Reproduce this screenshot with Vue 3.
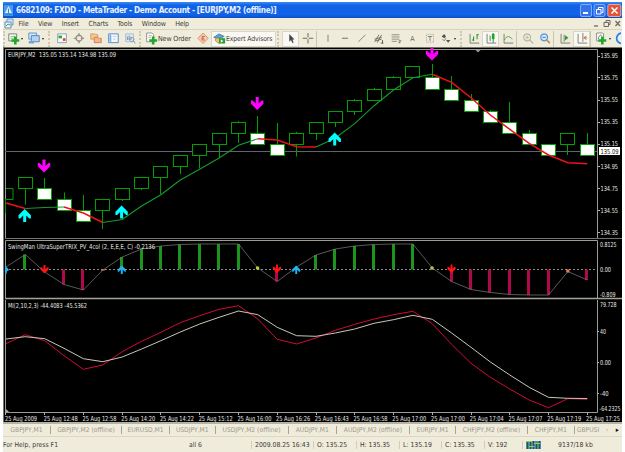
<script setup>
const menus = ['File', 'View', 'Insert', 'Charts', 'Tools', 'Window', 'Help']

// every icon is a list of shapes on a 16x14 grid
const icons = {
  newChart: [
    { d: 'M2 2h9v8H2z', f: '#f4f8f0', s: '#6b7d6b' },
    { d: 'M4 5h5M4 7h4', s: '#9ab09a' },
    { d: 'M8 5h3v3h3v3h-3v3H8v-3H5V8h3z', f: '#1fa82a' }
  ],
  profiles: [
    { d: 'M2 1h9v7H2z', f: '#cfe4f7', s: '#5a8fc0' },
    { d: 'M5 4h9v7H5z', f: '#b5d3f0', s: '#4a82ba' },
    { d: 'M2 10h6v3H2z', f: '#6fa4d8' }
  ],
  market: [
    { d: 'M3 2h10v10H3z', f: '#f8fafc', s: '#7c9ab8' },
    { d: 'M4 4h4v3H4z', f: '#2aa43a' },
    { d: 'M9 7h3v3H9z', f: '#d8402c' }
  ],
  target: [
    { d: 'M8 3.500a3.500 3.500 0 1 0 .1 0z', s: '#8a887c', w: 1.4 },
    { d: 'M8 1v4M8 9v4M2 7h4M10 7h4', s: '#8a887c', w: 1.2 }
  ],
  navigator: [
    { d: 'M2 2h5l1 1h2v5H2z', f: '#f2c890', s: '#d09868' },
    { d: 'M6 6h4l1 1h3v5H6z', f: '#f7b48a', s: '#cc7c4c' }
  ],
  terminal: [
    { d: 'M3 2h11v10H3z', f: '#f4f8fc', s: '#4684c4' },
    { d: 'M4 3h2v8H4z', f: '#78aee0' },
    { d: 'M8 5h4M8 8h3', s: '#b8cce0' }
  ],
  tester: [
    { d: 'M3 2h9v9H3z', f: '#dbe6ee', s: '#a8bccc' },
    { d: 'M5 9V5M7 9V4M9 9V6', s: '#6688a8' },
    { d: 'M10 6a2.4 2.4 0 1 0 .1 0zM12 10l2 3', s: '#7890a8' }
  ],
  order: [
    { d: 'M3 1h6l2 2v8H3z', f: '#fff', s: '#8a8a80' },
    { d: 'M5 4h4M5 6h3', s: '#b0b0a8' },
    { d: 'M9 5h3v3h3v3h-3v3H9v-3H6V8h3z', f: '#1fa82a' }
  ],
  diamond: [
    { d: 'M8 1l6 6-6 6-6-6z', f: '#f6c8ac', s: '#e09068' },
    { d: 'M10 5H7v4h3M7 7h2', s: '#c05c40' }
  ],
  expert: [
    { d: 'M2 6l6-4 6 3-6 2z', f: '#5aa4d8', s: '#3c7cae' },
    { d: 'M4 7h8v3l-4 3-4-3z', f: '#f0c070', s: '#b89048' },
    { d: 'M8 7h7v6H8z', f: '#20a030' },
    { d: 'M10 8l3 2-3 2z', f: '#fff' }
  ],
  cursor: [{ d: 'M6 2v9l2-2 1.5 3.5 1.5-.7-1.4-3.3H12z', f: '#48484c' }],
  cross: [{ d: 'M8 1v5M8 8v5M2 7h5M9 7h5', s: '#58564e' }],
  vline: [{ d: 'M8 3v8', s: '#77756a' }],
  hline: [{ d: 'M4.500 7h7', s: '#66645a' }],
  trend: [{ d: 'M4 11l8-8', s: '#77756a' }],
  channel: [
    { d: 'M3 11l5-8M6 12l5-9M3 8l8-2M4 10l7-2', s: '#66645a' },
    { d: 'M12 9v4M10 12.500h3', s: '#55534a' }
  ],
  fibo: [
    { d: 'M3 3h9M3 5.500h9M3 8h9M3 10.500h6', s: '#88867a' },
    { d: 'M11 10h3M11 12h2', s: '#55534a' }
  ],
  label: [
    { d: 'M4 2.500h8v9H4z', s: '#a09e90', dash: '1 1' },
    { d: 'M5.500 5h5M8 5v5', s: '#77756a' }
  ],
  arrows: [
    { d: 'M3 5l3-3 2 3-2 2z', f: '#55534a' },
    { d: 'M8 9h5l-2.500 3z', f: '#55534a' },
    { d: 'M4 8l2 2 2-3', s: '#77756a' }
  ],
  bars: [
    { d: 'M3.500 2v10.500H14', s: '#6f7468' },
    { d: 'M7.500 5v5M11.500 2v6M7.500 9h-2M11.500 3h2', s: '#1f9a2f', w: 1.2 }
  ],
  candles: [
    { d: 'M3.500 2v10.500H14', s: '#6f7468' },
    { d: 'M7 4v6M10.500 1v11', s: '#1f7a2a' },
    { d: 'M9 2h3v6H9z', f: '#16a828' }
  ],
  line: [
    { d: 'M3.500 2v10.500H14', s: '#6f7468' },
    { d: 'M4 9c2-5 5-5 9-1', s: '#4aa04a' }
  ],
  zoomIn: [
    { d: 'M7 2a4 4 0 1 0 .1 0zM10 9l4 4', s: '#b8b5a4', w: 1.3 },
    { d: 'M5 6h4M7 4v4', s: '#b8b5a4' }
  ],
  zoomOut: [
    { d: 'M7 2a4 4 0 1 0 .1 0z', f: '#d4e8fa', s: '#5794cc', w: 1.3 },
    { d: 'M10 9l3.500 3.500', s: '#c08a50', w: 2 },
    { d: 'M5 6h4', s: '#3878b4' }
  ],
  autoScroll: [
    { d: 'M3.500 2v10.500H14M7 3v8', s: '#6f7468' },
    { d: 'M8 3.500l4 3-4 3z', f: '#27a339' }
  ],
  shift: [
    { d: 'M3.500 2v10.500H14M9 1v10', s: '#6f7468' },
    { d: 'M14 6.500h-3M13 4.500l-3 2 3 2', s: '#c0602c' }
  ],
  indicators: [
    { d: 'M3 1h7l1 1v8H3z', f: '#fff', s: '#7c8478' },
    { d: 'M5 8c1-5 2-5 4-4', s: '#6a6a60' },
    { d: 'M8 5h3v3h3v3h-3v3H8v-3H5V8h3z', f: '#1fa82a' }
  ],
  clock: [{ d: 'M9 1a6 6 0 0 0 0 12', f: '#e4f0fc', s: '#2f80dc', w: 2 }]
}

const toolbar = [
  { t: 'grip' },
  { t: 'icon', icon: 'newChart', c: 'w14' }, { t: 'drop' },
  { t: 'icon', icon: 'profiles', c: 'w16' }, { t: 'drop' },
  { t: 'grip', c: 'w6' },
  { t: 'icon', icon: 'market' }, { t: 'icon', icon: 'target' },
  { t: 'icon', icon: 'navigator' }, { t: 'icon', icon: 'terminal' },
  { t: 'icon', icon: 'tester' },
  { t: 'grip', c: 'w6' },
  { t: 'icon', icon: 'order', text: 'New Order', c: 'order' },
  { t: 'icon', icon: 'diamond' },
  { t: 'icon', icon: 'expert', text: 'Expert Advisors', c: 'expert on' },
  { t: 'grip', c: 'w6' },
  { t: 'icon', icon: 'cursor', c: 'on' }, { t: 'icon', icon: 'cross' },
  { t: 'sep' },
  { t: 'icon', icon: 'vline' }, { t: 'icon', icon: 'hline' },
  { t: 'icon', icon: 'trend' }, { t: 'icon', icon: 'channel' },
  { t: 'icon', icon: 'fibo' }, { t: 'icon', text: 'A', c: 'letter' },
  { t: 'icon', icon: 'label' },
  { t: 'icon', icon: 'arrows', c: 'w16' }, { t: 'drop' },
  { t: 'grip', c: 'w6' },
  { t: 'icon', icon: 'bars' }, { t: 'icon', icon: 'candles', c: 'on' },
  { t: 'icon', icon: 'line' },
  { t: 'sep' },
  { t: 'icon', icon: 'zoomIn' }, { t: 'icon', icon: 'zoomOut' },
  { t: 'sep' },
  { t: 'icon', icon: 'autoScroll' }, { t: 'icon', icon: 'shift', c: 'on' },
  { t: 'sep' },
  { t: 'icon', icon: 'indicators', c: 'w16' }, { t: 'drop' },
  { t: 'icon', icon: 'clock', c: 'last' }
]

const px = (i) => +(5.9 + i * 19.38).toFixed(1)

// [top, bottom, high, low, falling]
const candles = [
  [188.5, 199.5, 188.5, 213, 0], [177.5, 188.5, 177.5, 204.5, 0],
  [188.5, 199.5, 178, 199.5, 1], [199.5, 210.5, 192.5, 210.5, 1],
  [210.5, 221.5, 195, 221.5, 1], [199.5, 210.5, 199.5, 229, 0],
  [188.5, 199.5, 188.5, 201, 0], [177.5, 188.5, 177.5, 190, 0],
  [166.5, 177.5, 166.5, 194, 0], [155.5, 166.5, 155.5, 174, 0],
  [144.5, 155.5, 144.5, 168.5, 0], [133.5, 144.5, 133.5, 157, 0],
  [122.5, 133.5, 121, 143, 0], [133.5, 144.5, 116, 144.5, 1],
  [144.5, 155.5, 123, 155.5, 1], [133.5, 144.5, 132, 156.5, 0],
  [122.5, 133.5, 122.5, 140, 0], [111.5, 122.5, 111.5, 127, 0],
  [100.5, 111.5, 99, 115, 0], [89.5, 100.5, 88, 100.5, 0],
  [77.5, 89.5, 76, 89.5, 0], [66.5, 77.5, 66.5, 77.5, 0],
  [77.5, 89.5, 64, 89.5, 1], [89.5, 100.5, 76, 100.5, 1],
  [100.5, 111.5, 94, 111.5, 1], [111.5, 122.5, 110, 122.5, 1],
  [122.5, 133.5, 102, 133.5, 1], [133.5, 144.5, 130, 144.5, 1],
  [144.5, 155.5, 144.5, 155.5, 1], [133.5, 144.5, 133.5, 155, 0],
  [144.5, 155.5, 133, 155.5, 1]
].map(([top, bottom, high, low, down], i) => ({ x: Math.floor(px(i)) + 0.5, top, bottom, high, low, down }))

const ma = [
  203, 208.5, 207.5, 207, 213, 222.5, 219.5, 206, 194.7, 180, 169.3, 158, 145.3, 138.7, 140, 146.7,
  147, 138, 123.7, 105.7, 90, 77.7, 74.3, 82.3, 97.7, 115, 129.3, 143.3, 155, 162.7, 163.7
]
const trix = [
  267, 254.5, 272, 284.5, 290, 270, 257, 249, 246, 244.5, 244, 244, 244, 268, 281.5, 267,
  255, 249, 246, 244.5, 244, 244, 268, 281.5, 289.5, 292.5, 294.5, 295, 295, 271.5, 280
]
const miFast = [
  343.7, 334.7, 340.7, 355.7, 369.3, 365, 351.7, 341.3, 332.3, 322.7, 315.7, 309.3, 305.7, 319, 339.3, 344,
  338, 330.3, 324.3, 319, 314.7, 311.3, 323.7, 344.3, 363.3, 377.3, 389, 400, 407.7, 398.7, 399.3
]
const miSlow = [
  339, 336.7, 338.7, 348.3, 358.7, 361.7, 357, 349, 340.7, 332, 324, 317.3, 311, 314.7, 327.3, 335.7,
  336.3, 333, 329, 323.3, 319.7, 315.3, 319.3, 333, 347.3, 362, 375, 387.3, 397.3, 398.3, 398.5
]

const pts = (list, from = 0, to = 30) =>
  list.slice(from, to + 1).map((y, k) => `${px(from + k)},${y}`).join(' ')

const maParts = [[0, 1, 1], [1, 3, 0], [3, 5, 1], [5, 13, 0], [13, 16, 1], [16, 22, 0], [22, 30, 1]]
  .map(([a, b, down]) => ({ p: pts(ma, a, b), down }))

const noBar = [0, 2, 5, 13, 15, 22, 29]
const hist = trix
  .map((y, i) => ({ i, x: Math.round(px(i)) - 2, y: Math.min(y, 269.5), h: Math.abs(y - 269.5), up: y < 269.5 }))
  .filter((b) => !noBar.includes(b.i))

const down = 'M-1.5 0h3v6.500l3-3h1.700v3.300L0 13l-6.200-6.200V3.500h1.700l3 3z'
const up = 'M-1.5 13h3V6.500l3 3h1.700V6.200L0 0l-6.200 6.200v3.300h1.700l3-3z'

const priceLabels = [
  ['135.95', 56], ['135.75', 77.5], ['135.55', 100], ['135.35', 122], ['135.15', 144],
  ['134.95', 166.5], ['134.75', 188.5], ['134.55', 210.5], ['134.35', 232.5]
]
const times = [
  '2009', '12:48', '12:58', '14:20', '14:22', '15:12', '16:00', '16:26',
  '16:43', '16:58', '17:00', '17:00', '17:04', '17:07', '17:19', '17:25'
]

const tabs = [
  'GBPJPY,M1', 'GBPJPY,M2 (offline)', 'EURUSD,M1', 'USDJPY,M1', 'USDJPY,M2 (offline)', 'AUDJPY,M1',
  'AUDJPY,M2 (offline)', 'EURJPY,M1', 'CHFJPY,M2 (offline)', 'CHFJPY,M1', 'GBPUSI'
]
</script>

<template>
  <div class="terminal">
    <header class="title">
      <svg class="logo" viewBox="0 0 10 12">
        <rect width="10" height="12" fill="#4c9ae8" />
        <path d="M5 1l4 8H1z" fill="#d8f0ff" />
        <path d="M1 10h8M5 4v5" stroke="#1878c8" />
      </svg>
      <span class="title-text">6682109: FXDD - MetaTrader - Demo Account - [EURJPY,M2 (offline)]</span>
      <svg class="win-btns" viewBox="0 0 42 13">
        <rect x=".5" y=".5" width="11" height="12" rx="1.500" fill="#3473ea" stroke="#a8c8ff" stroke-width=".7" />
        <path d="M3 9h5" stroke="#fff" stroke-width="2" />
        <rect x="14" y=".5" width="11" height="12" rx="1.500" fill="#3473ea" stroke="#a8c8ff" stroke-width=".7" />
        <path d="M18.500 5V3.500h4.500v5h-1.500M16.500 5.500h4.500v4.500h-4.500z" stroke="#fff" fill="none" />
        <rect x="27.800" y=".5" width="13" height="12" rx="1.500" fill="#e25436" stroke="#ffd0c0" stroke-width=".7" />
        <path d="M31.500 3.500l6 6M37.500 3.500l-6 6" stroke="#fff" stroke-width="1.500" />
      </svg>
    </header>

    <nav class="menu">
      <svg class="menu-logo" viewBox="0 0 10 11">
        <path d="M3 1h6v6H3z" fill="#d4e8f8" stroke="#6b9cc8" />
        <path d="M1 4h6v6H1z" fill="#eef6fc" stroke="#5a8ebc" />
        <path d="M2 8l2-2 2 1" fill="none" stroke="#4a9a5a" />
      </svg>
      <span v-for="m in menus" :key="m">{{ m }}</span>
      <svg class="mdi" viewBox="0 0 30 9">
        <path d="M2 7h4" stroke="#6c6a60" stroke-width="1.300" />
        <path d="M14 3.500v-2h4v4h-1.500M12 3.500h4.500v4H12z" stroke="#6c6a60" fill="none" />
        <path d="M23.500 2l4.500 5M28 2l-4.500 5" stroke="#6c6a60" stroke-width="1.200" />
      </svg>
    </nav>

    <div class="toolbar">
      <div v-for="(b, i) in toolbar" :key="i" :class="[b.t, b.c]">
        <svg v-if="b.icon" viewBox="0 0 16 14">
          <path
            v-for="(p, k) in icons[b.icon]"
            :key="k"
            :d="p.d"
            :fill="p.f || 'none'"
            :stroke="p.s"
            :stroke-width="p.w || 1"
            :stroke-dasharray="p.dash"
          />
        </svg>
        <span v-if="b.text">{{ b.text }}</span>
      </div>
    </div>

    <main class="chart">
      <svg class="price" viewBox="3 47 619 191">
        <path d="M5.500 238V49.500H597.500V238" class="frame" />
        <path d="M5 151.500H597" stroke="#5c666c" />
        <g v-for="c in candles.slice(1)" :key="c.x" stroke="#00a000">
          <path :d="`M${c.x} ${c.high}V${c.top}M${c.x} ${c.bottom}V${c.low}`" />
          <rect :x="c.x - 7" :y="c.top" width="14" :height="c.bottom - c.top" :fill="c.down ? '#fff' : '#000'" />
        </g>
        <path d="M6 188.500h7v11H6M5.500 199v14" stroke="#00a000" fill="none" />
        <polyline
          v-for="(m, i) in maParts"
          :key="i"
          :points="m.p"
          fill="none"
          :stroke="m.down ? '#f01018' : '#169a30'"
          :stroke-width="m.down ? 1.5 : 1.1"
        />
        <path v-for="[x, y] in [[44, 159.500], [257.200, 97], [432, 47.500]]" :key="x" :transform="`translate(${x} ${y})`" :d="down" fill="#ff00ff" />
        <path v-for="[x, y] in [[24.700, 209], [121.600, 205.500], [334.700, 132.500]]" :key="x" :transform="`translate(${x} ${y})`" :d="up" fill="#00ffff" />
        <path d="M475.500 50h5l-2.500 2.500z" fill="#8898a0" />
        <text x="8" y="56.800" textLength="108" lengthAdjust="spacingAndGlyphs">EURJPY,M2&#160; 135.05 135.14 134.98 135.09</text>
        <g v-for="[t, y] in priceLabels" :key="t">
          <path :d="`M598 ${Math.floor(y) + 0.5}h2`" stroke="#b0b0a8" />
          <text x="600.500" :y="y + 2.400" textLength="17.500" lengthAdjust="spacingAndGlyphs">{{ t }}</text>
        </g>
        <rect x="599" y="147" width="21" height="8" fill="#fff" />
        <text x="600.500" y="153.500" textLength="18" lengthAdjust="spacingAndGlyphs" class="dark">135.09</text>
      </svg>

      <svg class="trix" viewBox="3 238 619 62">
        <path d="M5 238.500H622" stroke="#77766e" />
        <path d="M5.500 299V240.500H597.500V299" class="frame" />
        <path d="M5 269.500H597" stroke="#8c8c8c" stroke-dasharray="2 2" />
        <rect v-for="b in hist" :key="b.i" :x="b.x" :y="b.y" width="3" :height="b.h" :fill="b.up ? '#1a961c' : '#b0084c'" />
        <polyline :points="pts(trix)" fill="none" stroke="#707070" stroke-width=".8" />
        <path
          v-for="[x, y] in [[44.500, 265], [277, 264.500], [451.500, 264.500]]"
          :key="x"
          :transform="`translate(${x} ${y}) scale(.65)`"
          :d="down"
          fill="#ff1414"
        />
        <path
          v-for="[x, y] in [[121.800, 265.500], [296.200, 265.500]]"
          :key="x"
          :transform="`translate(${x} ${y}) scale(.65)`"
          :d="up"
          fill="#20b4f0"
        />
        <path d="M5 265.500l3.500 3.500v2H7l-.5 3H5z" fill="#20b4f0" />
        <path d="M101 270h4" stroke="#e08060" />
        <circle cx="257.500" cy="268" r="1.800" fill="#b8d030" />
        <circle cx="432" cy="268" r="1.800" fill="#b8d030" />
        <circle cx="567.800" cy="271" r="1.800" fill="#f07850" />
        <text x="8" y="249" textLength="147" lengthAdjust="spacingAndGlyphs">SwingMan UltraSuperTRIX_PV_4col (2, E,E,E, C) -0.2136</text>
        <text x="600" y="247" textLength="16.500" lengthAdjust="spacingAndGlyphs">0.8125</text>
        <text x="600" y="272" textLength="11" lengthAdjust="spacingAndGlyphs">0.00</text>
        <text x="600" y="297" textLength="15.500" lengthAdjust="spacingAndGlyphs">-0.809</text>
        <path d="M5 298.500H622" stroke="#a5a494" stroke-width="1.500" />
      </svg>

      <svg class="mi" viewBox="3 300 619 122">
        <path d="M5.500 300V412.500H597.500V300" class="frame" />
        <polyline :points="pts(miFast)" fill="none" stroke="#d00c34" />
        <polyline :points="pts(miSlow)" fill="none" stroke="#c8c8b8" />
        <path d="M6 409l3 3H6z" fill="#a0b0b8" />
        <text x="8" y="308" textLength="79" lengthAdjust="spacingAndGlyphs">MI(2,10,2,3) -44.4083 -45.5362</text>
        <text x="600" y="306.500" textLength="16.500" lengthAdjust="spacingAndGlyphs">79.728</text>
        <text x="600" y="333.500" textLength="6" lengthAdjust="spacingAndGlyphs">40</text>
        <text x="600" y="364.700" textLength="11" lengthAdjust="spacingAndGlyphs">0.00</text>
        <text x="600" y="395.700" textLength="8.500" lengthAdjust="spacingAndGlyphs">-40</text>
        <text x="599.500" y="411.300" textLength="21" lengthAdjust="spacingAndGlyphs">-64.2325</text>
        <path d="M597 331.500h2M597 362.500h2M597 393.500h2" stroke="#b0b0a8" />
        <g v-for="(t, i) in times" :key="i">
          <path :d="`M${Math.floor(px(i * 2)) + 0.5} 412v3`" stroke="#b0b0a8" />
          <text :x="5 + i * 38.730" y="420.800" :textLength="i ? 34 : 32" lengthAdjust="spacingAndGlyphs">25 Aug {{ t }}</text>
        </g>
      </svg>
    </main>

    <div class="tabs">
      <span v-for="t in tabs" :key="t" class="tab">{{ t }}</span>
      <span class="arrow off">‹</span>
      <span class="arrow">▸</span>
    </div>

    <footer class="status">
      <span>For Help, press F1</span>
      <span>all 6</span>
      <span class="cell">2009.08.25 16:43</span>
      <span class="cell">O: 135.25</span>
      <span class="cell">H: 135.35</span>
      <span class="cell">L: 135.19</span>
      <span class="cell">C: 135.35</span>
      <span class="cell">V: 192</span>
      <span class="cell net">
        <svg viewBox="0 0 15 8">
          <rect width="15" height="8" fill="#4c88b0" />
          <path d="M1.500 0v8M4.500 1v7M7.500 0v8M10.500 2v6M13.500 0v8" stroke="#245c28" />
          <path d="M0 .5h6M8 2.500h6M3 5.500h5" stroke="#a4c850" />
        </svg>
        9137/18 kb
      </span>
    </footer>
    <div class="taskbar"><i></i><b></b></div>
  </div>
</template>

<style>
body {
  background: #fff;
}
</style>

<style scoped>
.terminal {
  width: 619px;
  height: 450px;
  margin: 0 3px;
  padding-top: 2px;
  display: flex;
  flex-direction: column;
  background: #f0ecdc;
  background-clip: content-box;
  font-family: 'DejaVu Sans Condensed', 'Noto Sans', sans-serif;
  font-size: 6.800px;
  color: #3c3a34;
  white-space: nowrap;
}

.title {
  height: 16px;
  flex: none;
  display: flex;
  align-items: center;
  background: linear-gradient(#3c8cf6, #1162e6 20%, #1162e6 80%, #0c4cc4);
  color: #e8f0ff;
}

.logo {
  width: 9px;
  height: 11px;
  margin-left: 1px;
}

.title-text {
  margin-left: 3px;
  font: 600 8.200px 'DejaVu Sans Condensed', sans-serif;
  letter-spacing: -0.35px;
}

.win-btns {
  width: 42px;
  height: 13px;
  margin-left: auto;
}

.menu {
  height: 12px;
  flex: none;
  display: flex;
  align-items: center;
  gap: 9.500px;
  padding-left: 1px;
  border-bottom: 1px solid #d8d2be;
  box-sizing: border-box;
  font-size: 7px;
  letter-spacing: -0.150px;
}

.menu-logo {
  width: 10px;
  height: 11px;
  margin-right: -5px;
}

.mdi {
  width: 30px;
  height: 9px;
  margin-left: auto;
}

.toolbar {
  height: 17px;
  flex: none;
  display: flex;
  align-items: center;
}

.toolbar > div {
  flex: none;
  height: 16px;
  box-sizing: border-box;
}

.icon {
  width: 17px;
  display: flex;
  align-items: center;
  justify-content: center;
  font-size: 7px;
}

.icon svg {
  width: 14px;
  height: 12.500px;
  flex: none;
}

.icon.w14 {
  width: 14px;
}

.icon.w16 {
  width: 16px;
}

.icon.on {
  background: #faf8f2;
  border: 1px solid #dad5c4;
}

.icon.order {
  width: 50px;
  justify-content: flex-start;
  letter-spacing: -0.100px;
}

.icon.expert {
  width: 65px;
  justify-content: flex-start;
  font-size: 6.800px;
  letter-spacing: -0.100px;
}

.toolbar > .last {
  width: 7px;
  overflow: hidden;
  justify-content: flex-start;
}

.letter {
  color: #66645a;
}

.grip {
  width: 4px;
  border-left: 2px dotted #cdc7b0;
}

.grip.w6 {
  width: 6px;
  margin-left: 1px;
  margin-right: -1px;
}

.sep {
  width: 3px;
  border-left: 1px solid #cac5b2;
}

.drop {
  width: 5px;
  display: flex;
  align-items: center;
}

.drop::before {
  content: '';
  border: 1.500px solid transparent;
  border-top: 2px solid #222;
  border-bottom: 0;
}

.chart {
  flex: none;
  background: #000;
  border-bottom: 2px solid #b6b3a4;
}

.chart svg {
  display: block;
  width: 619px;
}

.price {
  height: 191px;
  box-shadow: inset 1px 1px #77756c;
}

.trix {
  height: 62px;
}

.mi {
  height: 122px;
}

.trix,
.mi {
  box-shadow: inset 1px 0 #77756c;
}

.frame {
  fill: none;
  stroke: #9c9c90;
}

.chart text {
  fill: #e6e6e2;
  font-size: 6.800px;
}

.chart text.dark {
  fill: #111;
}

.tabs {
  height: 12px;
  flex: none;
  display: grid;
  grid-template-columns: 48px 71px 48px 45.500px 73px 48.500px 73px 46px 72px 46.500px 27px 11px 9.500px;
  align-items: center;
  color: #9c988a;
  font-size: 6.700px;
}

.tab {
  text-align: center;
  line-height: 8px;
  border-right: 1px solid #a8a494;
}

.tab:nth-of-type(11) {
  border: 0;
}

.arrow {
  text-align: center;
  color: #111;
}

.arrow.off {
  color: #a8a494;
}

.status {
  flex: 1;
  display: grid;
  grid-template-columns: 186px 62px 62px 43px 43px 42px 43px 38px 1fr;
  align-items: center;
  border-top: 1px solid #dcd7c6;
}

.cell {
  padding-left: 3px;
  border-left: 1px solid #d2cdba;
}

.net {
  display: flex;
  align-items: center;
  gap: 17px;
}

.net svg {
  width: 15px;
  height: 8px;
}

.taskbar {
  height: 2px;
  margin-bottom: -2px;
  flex: none;
  display: flex;
  background: #2f84ea;
}

.taskbar i {
  width: 56px;
  background: #3c9c44;
}

.taskbar b {
  width: 89px;
  margin-left: auto;
  background: #18a0e6;
}
</style>
